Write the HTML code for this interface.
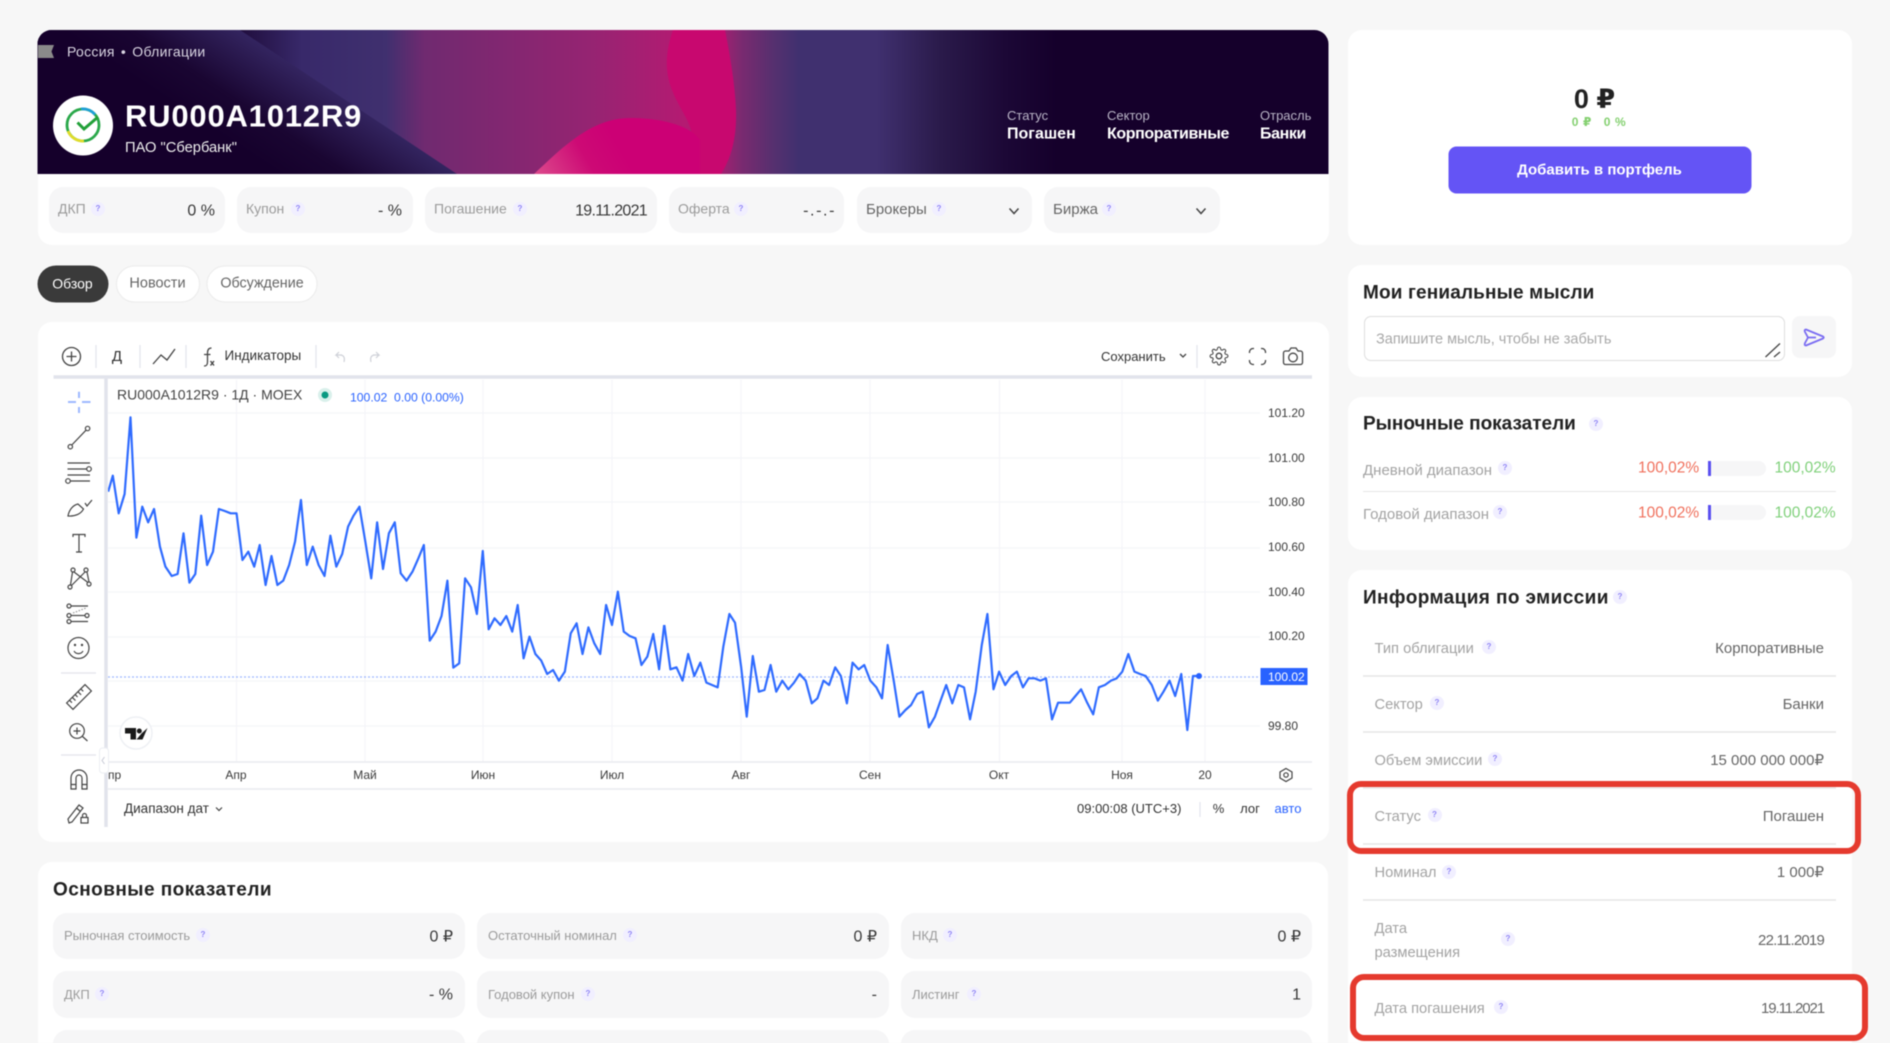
<!DOCTYPE html>
<html lang="ru"><head><meta charset="utf-8"><title>RU000A1012R9</title>
<style>
html,body{margin:0;padding:0;background:#f7f7f7}
#p{position:relative;width:1890px;height:1043px;overflow:hidden;background:#f7f7f7;font-family:"Liberation Sans","DejaVu Sans",sans-serif;color:#333;filter:blur(.45px)}
.c{position:absolute;background:#fff;border-radius:14px}
.b{position:absolute;background:#f6f6f7;border-radius:14px}
.t{position:absolute;white-space:nowrap;transform:translateY(-50%);line-height:1.2}
.r{position:absolute;white-space:nowrap;transform:translateY(-50%);line-height:1.2;text-align:right}
.m{position:absolute;white-space:nowrap;transform:translate(-50%,-50%);line-height:1.2;text-align:center}
.q{position:absolute;width:14px;height:14px;border-radius:50%;background:#f1efff;color:#8f84f5;font-size:8px;font-weight:bold;text-align:center;line-height:14px;transform:translate(-50%,-50%)}
.g{color:#9b9b9b;font-size:14px}
.v{font-size:16px;color:#383838}
.h{font-size:19px;font-weight:bold;color:#222}
.l{font-size:13px;color:#9b9b9b}
.w{font-size:14.7px;color:#a3a3a3}
.x{font-size:15px;color:#666}
.ax{font-size:12px;color:#3a3a3a}
svg{position:absolute;left:0;top:0}
</style></head><body><div id="p">

<div class="c" style="left:37.5px;top:30px;width:1291px;height:215px"></div>
<svg width="1890" height="180" viewBox="0 0 1890 180">
<defs>
<linearGradient id="bg" x1="0" x2="1" y1="0" y2="0" gradientUnits="objectBoundingBox">
<stop offset="0" stop-color="#140029"/><stop offset=".145" stop-color="#1a0632"/><stop offset=".205" stop-color="#38296a"/><stop offset=".27" stop-color="#40306f"/><stop offset=".3" stop-color="#702a70"/><stop offset=".43" stop-color="#962472"/><stop offset=".5" stop-color="#b41b72"/><stop offset=".525" stop-color="#b01c72"/><stop offset=".545" stop-color="#7a2a70"/><stop offset=".57" stop-color="#56306f"/><stop offset=".59" stop-color="#40306f"/><stop offset=".65" stop-color="#40306f"/><stop offset=".7" stop-color="#2a1a4a"/><stop offset=".75" stop-color="#1c0836"/><stop offset=".79" stop-color="#15002b"/><stop offset="1" stop-color="#15002b"/>
</linearGradient>
<linearGradient id="dk" gradientUnits="userSpaceOnUse" x1="323" y1="205" x2="378" y2="122">
<stop offset="0" stop-color="#15002b"/><stop offset=".4" stop-color="#1a0632"/><stop offset="1" stop-color="#33245f"/>
</linearGradient>
<linearGradient id="bl2" gradientUnits="userSpaceOnUse" x1="535" y1="174" x2="610" y2="130">
<stop offset="0" stop-color="#dc4a8c"/><stop offset=".6" stop-color="#cd0a75"/><stop offset="1" stop-color="#cc0075"/>
</linearGradient>
<clipPath id="bc"><path d="M51.5 30H1314.5a14 14 0 0 1 14 14V174H37.5V44a14 14 0 0 1 14-14z"/></clipPath>
</defs>
<g clip-path="url(#bc)">
<rect x="37.5" y="30" width="1291" height="144" fill="url(#bg)"/>
<path d="M37.5 30H240L457 174H37.5Z" fill="url(#dk)"/>
<path d="M673 30C666 50 664 70 672 90C680 110 690 120 692 135V174H721C730 160 737 140 736 110C735 85 730 55 725 30Z" fill="#c8086f"/>
<path d="M534 174C560 150 590 118 630 118C660 118 690 125 700 140V174Z" fill="url(#bl2)"/>
<path d="M38 45H54L51.5 51.5L54 58H38Z" fill="#8a8a8a"/>
</g>
<circle cx="83" cy="125.500" r="30" fill="#fff"/>
<circle cx="83" cy="125" r="16" fill="none" stroke="#2aa84a" stroke-width="2.800"/>
<path d="M81 109A16 16 0 0 1 95 114.500" fill="none" stroke="#1e9fd6" stroke-width="2.800"/>
<path d="M68 131A16 16 0 0 0 84 141" fill="none" stroke="#e0dc2a" stroke-width="2.800"/>
<path d="M77.500 122.500L84 129L98 117" fill="none" stroke="#21a038" stroke-width="3"/>
</svg>
<div class="t" style="left:67px;top:51.500px;font-size:14px;color:#d9d5e2;letter-spacing:.3px;word-spacing:2px">Россия • Облигации</div>
<div class="t" style="left:125px;top:115.500px;font-size:31px;font-weight:bold;color:#fff;letter-spacing:.8px">RU000A1012R9</div>
<div class="t" style="left:125px;top:148.500px;font-size:14.700px;color:#eee">ПАО "Сбербанк"</div>
<div class="t" style="left:1007px;top:116px;font-size:13px;color:#b9b4c6">Статус</div>
<div class="t" style="left:1007px;top:134px;font-size:16px;font-weight:bold;color:#fff">Погашен</div>
<div class="t" style="left:1107px;top:116px;font-size:13px;color:#b9b4c6">Сектор</div>
<div class="t" style="left:1107px;top:134px;font-size:16px;font-weight:bold;color:#fff;letter-spacing:-.4px">Корпоративные</div>
<div class="t" style="left:1260px;top:116px;font-size:13px;color:#b9b4c6">Отрасль</div>
<div class="t" style="left:1260px;top:134px;font-size:16px;font-weight:bold;color:#fff;letter-spacing:-.4px">Банки</div>

<div class="b" style="left:49px;top:187px;width:176px;height:46px"></div>
<div class="b" style="left:237px;top:187px;width:176px;height:46px"></div>
<div class="b" style="left:425px;top:187px;width:232px;height:46px"></div>
<div class="b" style="left:669px;top:187px;width:175px;height:46px"></div>
<div class="b" style="left:857px;top:187px;width:175px;height:46px"></div>
<div class="b" style="left:1044px;top:187px;width:176px;height:46px"></div>
<div class="t g" style="left:58px;top:209px">ДКП</div><div class="q" style="left:98px;top:209px">?</div>
<div class="r v" style="right:1675px;top:211px">0 %</div>
<div class="t g" style="left:246px;top:209px">Купон</div><div class="q" style="left:298px;top:209px">?</div>
<div class="r v" style="right:1488px;top:211px">- %</div>
<div class="t g" style="left:434px;top:209px">Погашение</div><div class="q" style="left:520px;top:209px">?</div>
<div class="r v" style="right:1243px;top:211px;letter-spacing:-.7px">19.11.2021</div>
<div class="t g" style="left:678px;top:209px">Оферта</div><div class="q" style="left:741px;top:209px">?</div>
<div class="r v" style="right:1054px;top:211px;letter-spacing:1.6px">-.-.-</div>
<div class="t" style="left:866px;top:210px;font-size:15px;color:#666">Брокеры</div><div class="q" style="left:939px;top:209px">?</div>
<div class="t" style="left:1053px;top:210px;font-size:15px;color:#666">Биржа</div><div class="q" style="left:1109px;top:209px">?</div>

<div class="m" style="left:72.500px;top:283.500px;width:71px;height:37px;line-height:37px;background:#3a3a3a;border-radius:19px;color:#fff;font-size:14px">Обзор</div>
<div class="m" style="left:157.500px;top:283.500px;width:82px;height:35px;line-height:35px;background:#fff;border:1px solid #ebebeb;border-radius:19px;color:#666;font-size:14.500px">Новости</div>
<div class="m" style="left:262px;top:283.500px;width:109px;height:35px;line-height:35px;background:#fff;border:1px solid #ebebeb;border-radius:19px;color:#666;font-size:14.300px">Обсуждение</div>

<div class="c" style="left:37.500px;top:322px;width:1291px;height:520px"></div>
<div class="c" style="left:37.500px;top:862px;width:1290px;height:200px"></div>

<svg width="1890" height="1043" viewBox="0 0 1890 1043" fill="none">
<defs><clipPath id="ch"><rect x="108" y="380" width="1152" height="382"/></clipPath></defs>
<g stroke="#f4f5f8" stroke-width="1.200">
<path d="M108 413H1260M108 458H1260M108 502H1260M108 548H1260M108 592H1260M108 637H1260M108 681H1260M108 726H1260"/>
<path d="M236.500 380V762M365 380V762M483 380V762M612 380V762M741 380V762M870 380V762M999.500 380V762M1122 380V762M1205 380V762"/>
</g>
<path d="M53.500 377H1312" stroke="#e2e4ec" stroke-width="3.500"/>
<path d="M106 377V827" stroke="#e2e4ec" stroke-width="3.500"/>
<path d="M108 762H1312M108 789H1312" stroke="#e9eaef" stroke-width="1.500"/>
<path d="M108 677H1260" stroke="#2962ff" stroke-opacity=".45" stroke-width="1.200" stroke-dasharray="2 2"/>
<g clip-path="url(#ch)" stroke="#2f6bff" stroke-width="2.200" stroke-linejoin="round">
<polyline vector-effect="non-scaling-stroke" transform="translate(40 370) scale(.42088 .33333)" points="162,365 173,317 187,430 201,372 215,142 229,503 243,410 257,457 271,417 285,530 298,590 313,618 327,612 341,490 355,638 369,612 383,437 397,585 411,545 425,417 439,423 453,430 467,430 481,570 495,545 509,590 522,525 536,645 550,558 564,645 578,632 592,585 606,515 620,390 634,585 648,530 662,585 676,618 690,497 704,590 718,552 732,470 745,437 759,410 773,515 787,625 801,457 815,597 829,490 843,457 857,610 871,632 885,605 899,565 912,525 926,812 940,785 954,738 968,632 982,893 996,880 1010,625 1024,652 1038,732 1052,543 1066,778 1080,745 1094,765 1108,738 1122,785 1135,705 1149,865 1163,800 1177,852 1191,872 1205,912 1219,900 1233,932 1247,905 1261,790 1275,760 1289,852 1303,772 1317,820 1331,852 1345,705 1359,765 1373,665 1387,785 1401,798 1415,805 1429,885 1443,860 1457,792 1471,898 1483,765"/>
<polyline vector-effect="non-scaling-stroke" transform="translate(660 370) scale(.43365 .33333)" points="10,765 24,898 38,892 52,932 65,852 79,918 93,878 107,938 120,945 133,952 146,830 160,732 173,758 187,890 200,1040 214,858 228,965 241,960 255,885 268,965 282,932 296,958 309,938 322,912 336,932 350,1000 363,985 377,932 390,945 404,892 417,918 431,1000 444,878 458,898 471,885 485,932 499,952 512,985 525,825 539,932 552,1040 566,1020 579,1005 593,972 606,965 620,1072 634,1040 647,992 660,945 674,1000 688,945 701,952 715,1048 728,965 742,825 755,732 769,958 782,905 796,945 810,918 823,905 837,952 850,925 864,925 877,932 890,925 904,1048 918,998 931,998 945,998 958,978 971,958 985,998 999,1033 1012,952 1026,945 1040,932 1053,925 1066,905 1080,852 1094,905 1107,912 1120,918 1134,945 1148,992 1161,965 1175,932 1188,978 1202,912 1216,1080 1229,918 1243,918"/>
</g>
<circle cx="1199" cy="676" r="3" fill="#2962ff"/>
<rect x="1260.500" y="668" width="47" height="17" fill="#2962ff"/>
<circle cx="325" cy="395" r="7" fill="#d9f0eb"/><circle cx="325" cy="395" r="3.500" fill="#089981"/>
<g stroke="#e2e4ec" stroke-width="1.200"><path d="M96 345V368M140 345V368M186 345V368M316 345V368M1197 345V368"/></g>
<g stroke="#444" stroke-width="1.300">
<circle cx="71.500" cy="356.500" r="9"/><path d="M71.500 351.500V361.500M66.500 356.500H76.500"/>
<path d="M153 364L161 355L167 360L175 349"/>
<path d="M211.500 348C208.500 348 207.500 350 207.500 353V362C207.500 365 206.500 366 204 366M204 354.500H210.500"/>
<path d="M210.500 361L214 365.500M214 361L210.500 365.500" stroke-width="1.400"/>
<path d="M1180 354L1183 357L1186 354"/>
<path transform="translate(1209.300 346.300) scale(.81)" d="M19.400 15a1.650 1.650 0 0 0 .33 1.820l.06.06a2 2 0 0 1 0 2.830 2 2 0 0 1-2.830 0l-.06-.06a1.650 1.650 0 0 0-1.820-.33 1.650 1.650 0 0 0-1 1.510V21a2 2 0 0 1-2 2 2 2 0 0 1-2-2v-.09A1.650 1.650 0 0 0 9 19.400a1.650 1.650 0 0 0-1.820.33l-.06.06a2 2 0 0 1-2.830 0 2 2 0 0 1 0-2.830l.06-.06a1.650 1.650 0 0 0 .33-1.820 1.650 1.650 0 0 0-1.510-1H3a2 2 0 0 1-2-2 2 2 0 0 1 2-2h.09A1.650 1.650 0 0 0 4.600 9a1.650 1.650 0 0 0-.33-1.820l-.06-.06a2 2 0 0 1 0-2.830 2 2 0 0 1 2.830 0l.06.06a1.650 1.650 0 0 0 1.820.33H9a1.650 1.650 0 0 0 1-1.510V3a2 2 0 0 1 2-2 2 2 0 0 1 2 2v.09a1.650 1.650 0 0 0 1 1.510 1.650 1.650 0 0 0 1.820-.33l.06-.06a2 2 0 0 1 2.830 0 2 2 0 0 1 0 2.830l-.06.06a1.650 1.650 0 0 0-.33 1.820V9a1.650 1.650 0 0 0 1.510 1H21a2 2 0 0 1 2 2 2 2 0 0 1-2 2h-.09a1.650 1.650 0 0 0-1.510 1z"/>
<circle cx="1219" cy="356" r="2.800"/>
<path d="M1249.500 353V352a3.500 3.500 0 0 1 3.500-3.500H1254M1261 348.500h1a3.500 3.500 0 0 1 3.500 3.500V353M1265.500 360V361a3.500 3.500 0 0 1-3.500 3.500H1261M1254 364.500h-1a3.500 3.500 0 0 1-3.500-3.500V360"/>
<path d="M1285.500 351H1289L1291 348H1296L1298 351H1300.500A2 2 0 0 1 1302.500 353V362.500A2 2 0 0 1 1300.500 364.500H1285.500A2 2 0 0 1 1283.500 362.500V353A2 2 0 0 1 1285.500 351Z"/>
<circle cx="1293" cy="357.500" r="4.300"/>
</g>
<g stroke="#cfd1d8" stroke-width="1.200"><path d="M342 355H336L339 352M336 355L339 358M336 355H340C344 355 345 358 344 362"/><path d="M373 355H379L376 352M379 355L376 358M379 355H375C371 355 370 358 371 362"/></g>
<g stroke="#9db8ff" stroke-width="2"><path d="M79 391.700V398M79 407V413M68 402H76M82 402H90.500"/></g>
<g stroke="#444" stroke-width="1.200">
<circle cx="70.300" cy="446.700" r="2.200"/><circle cx="87.600" cy="428.500" r="2.200"/><path d="M71.800 445L86 430.200"/>
<path d="M67.500 463H90M67.500 469H86.500M67.500 475H90M70.500 481H90"/><circle cx="89" cy="469" r="2.300"/><circle cx="68" cy="481" r="2.300"/>
<path d="M68 516C69 510 73 505 78 504L83.500 509C81 514 75 516.500 68 516Z"/><path d="M85 503L87 506L92 500"/>
<path d="M73 537V534.500H85V537M79 534.500V552M76 552H82"/>
<circle cx="73" cy="570" r="2"/><circle cx="86" cy="570" r="2"/><circle cx="70" cy="587" r="2"/><circle cx="89" cy="584" r="2"/>
<path d="M72.500 572L70.500 585M74 572L88 582.500M85 572L71.500 585.500M87 572L89 582"/>
<circle cx="69" cy="606" r="2"/><path d="M71 606H88"/><circle cx="69" cy="615.500" r="2"/><circle cx="87" cy="615.500" r="2"/><path d="M71 615.500H85"/><circle cx="69" cy="621.500" r="2"/><path d="M71 621.500H88"/><path d="M73 613L86 608" stroke-dasharray="1.500 1.500" stroke="#999"/>
<circle cx="78.500" cy="648" r="10.500"/><path d="M74 651C76 654.500 81 654.500 83 651"/><circle cx="75" cy="645" r=".6" fill="#444"/><circle cx="82" cy="645" r=".6" fill="#444"/>
<g transform="rotate(-45 79 697)"><rect x="66" y="692.500" width="26" height="9"/><path d="M70 692.500V696M74 692.500V697M78 692.500V696M82 692.500V697M86 692.500V696"/></g>
<circle cx="77" cy="731" r="7.300"/><path d="M82.500 736.500L87.500 741M77 727.500V734.500M73.500 731H80.500"/>
<path d="M71 789V778a8 8 0 0 1 16 0V789H82V778a3 3 0 0 0-6 0V789ZM71 784.500H76M82 784.500H87"/>
<path d="M69 823L68 819L79 805L83 808L72 822Z M76.500 808L80.500 811.500"/>
<rect x="81" y="817.500" width="7" height="5.500"/><path d="M82.500 817.500V815.500a2 2 0 0 1 4 0V817.500"/>
</g>
<path d="M61 673H96M61 755H96" stroke="#e2e4ec" stroke-width="1.200"/>
<rect x="99.500" y="748" width="9" height="25" rx="3" fill="#fff" stroke="#eceef3"/>
<path d="M104.500 757L102 760.500L104.500 764" stroke="#c8cbd6" stroke-width="1"/>
<circle cx="136" cy="733" r="16" fill="#fff" stroke="#eef0f4" stroke-width="1.500"/>
<path d="M125 728H136V739.500H130.500V733.500H125Z" fill="#1a1a1a"/><circle cx="139.300" cy="731" r="2.500" fill="#1a1a1a"/><path d="M147.500 728L142.500 739.500H136.500L141.500 733.500Z" fill="#1a1a1a"/>
<path d="M1286 768.500L1292 772V778L1286 781.500L1280 778V772Z" stroke="#444" stroke-width="1.200"/><circle cx="1286" cy="775" r="2.200" stroke="#444" stroke-width="1.200"/>
<path d="M1200 802V817" stroke="#e2e4ec" stroke-width="1.200"/>
<path d="M216 807.500L219 810.500L222 807.500" stroke="#444" stroke-width="1.200"/>
<path d="M1009.500 208.500L1014 213.500L1018.500 208.500M1196.500 208.500L1201 213.500L1205.500 208.500" stroke="#444" stroke-width="1.500"/>
</svg>

<div class="t" style="left:117px;top:356.500px;transform:translate(-50%,-50%);font-size:15px;color:#333">Д</div>
<div class="t" style="left:224.500px;top:356px;font-size:13.500px;color:#333">Индикаторы</div>
<div class="t" style="left:1101px;top:356.500px;font-size:13px;color:#333">Сохранить</div>
<div class="t" style="left:117px;top:395px;font-size:14px;color:#444">RU000A1012R9 · 1Д · MOEX</div>
<div class="t" style="left:350px;top:398px;font-size:12.200px;color:#2962ff">100.02&nbsp; 0.00 (0.00%)</div>
<div class="t ax" style="left:1268px;top:413px">101.20</div>
<div class="t ax" style="left:1268px;top:458px">101.00</div>
<div class="t ax" style="left:1268px;top:502px">100.80</div>
<div class="t ax" style="left:1268px;top:547px">100.60</div>
<div class="t ax" style="left:1268px;top:592px">100.40</div>
<div class="t ax" style="left:1268px;top:636px">100.20</div>
<div class="t ax" style="left:1268px;top:677px;color:#fff">100.02</div>
<div class="t ax" style="left:1268px;top:726px">99.80</div>
<div class="t ax" style="left:108px;top:775px">пр</div>
<div class="m ax" style="left:236px;top:775px">Апр</div>
<div class="m ax" style="left:365px;top:775px">Май</div>
<div class="m ax" style="left:483px;top:775px">Июн</div>
<div class="m ax" style="left:612px;top:775px">Июл</div>
<div class="m ax" style="left:741px;top:775px">Авг</div>
<div class="m ax" style="left:870px;top:775px">Сен</div>
<div class="m ax" style="left:999px;top:775px">Окт</div>
<div class="m ax" style="left:1122px;top:775px">Ноя</div>
<div class="m ax" style="left:1205px;top:775px">20</div>
<div class="t" style="left:124px;top:809px;font-size:13.500px;color:#333">Диапазон дат</div>
<div class="t" style="left:1077px;top:809px;font-size:13px;color:#333">09:00:08 (UTC+3)</div>
<div class="m" style="left:1218.500px;top:809px;font-size:13px;color:#333">%</div>
<div class="m" style="left:1250px;top:809px;font-size:13px;color:#333">лог</div>
<div class="m" style="left:1288px;top:809px;font-size:13px;color:#2962ff">авто</div>

<div class="t h" style="left:53px;top:891px;letter-spacing:.45px">Основные показатели</div>
<div class="b" style="left:53px;top:913px;width:412px;height:46px"></div>
<div class="b" style="left:477px;top:913px;width:412px;height:46px"></div>
<div class="b" style="left:901px;top:913px;width:411px;height:46px"></div>
<div class="b" style="left:53px;top:971px;width:412px;height:47px"></div>
<div class="b" style="left:477px;top:971px;width:412px;height:47px"></div>
<div class="b" style="left:901px;top:971px;width:411px;height:47px"></div>
<div class="b" style="left:53px;top:1030px;width:412px;height:47px"></div>
<div class="b" style="left:477px;top:1030px;width:412px;height:47px"></div>
<div class="b" style="left:901px;top:1030px;width:411px;height:47px"></div>
<div class="t l" style="left:64px;top:936px">Рыночная стоимость</div><div class="q" style="left:203px;top:935px">?</div><div class="r v" style="right:1437px;top:937px">0 ₽</div>
<div class="t l" style="left:488px;top:936px">Остаточный номинал</div><div class="q" style="left:630px;top:935px">?</div><div class="r v" style="right:1013px;top:937px">0 ₽</div>
<div class="t l" style="left:912px;top:936px">НКД</div><div class="q" style="left:950px;top:935px">?</div><div class="r v" style="right:589px;top:937px">0 ₽</div>
<div class="t l" style="left:64px;top:995px">ДКП</div><div class="q" style="left:102px;top:994px">?</div><div class="r v" style="right:1437px;top:995px">- %</div>
<div class="t l" style="left:488px;top:995px">Годовой купон</div><div class="q" style="left:588px;top:994px">?</div><div class="r v" style="right:1013px;top:995px">-</div>
<div class="t l" style="left:912px;top:995px">Листинг</div><div class="q" style="left:974px;top:994px">?</div><div class="r v" style="right:589px;top:995px">1</div>

<div class="c" style="left:1348px;top:30px;width:504px;height:215px"></div>
<div class="c" style="left:1348px;top:265px;width:504px;height:112px"></div>
<div class="c" style="left:1348px;top:397px;width:504px;height:153px"></div>
<div class="c" style="left:1348px;top:570px;width:504px;height:500px"></div>
<div class="m" style="left:1594.500px;top:99px;font-size:27px;font-weight:bold;color:#222">0 ₽</div>
<div class="m" style="left:1599px;top:122px;font-size:12px;font-weight:bold;color:#84d070;letter-spacing:.6px">0 ₽ &nbsp; 0 %</div>
<div class="m" style="left:1599.500px;top:169.500px;width:303px;height:47px;line-height:47px;background:#6454f5;border-radius:8px;color:#fff;font-size:15px;font-weight:bold">Добавить в портфель</div>

<div class="t h" style="left:1363px;top:294px;letter-spacing:.15px">Мои гениальные мысли</div>
<div style="position:absolute;left:1363.500px;top:316px;width:419px;height:43px;border:1.500px solid #dedede;border-radius:7px;background:#fff"></div>
<div class="t" style="left:1376px;top:340px;font-size:14.500px;color:#a8a8a8">Запишите мысль, чтобы не забыть</div>
<div class="b" style="left:1792px;top:316px;width:44px;height:42px;border-radius:8px"></div>

<div class="t h" style="left:1363px;top:425px">Рыночные показатели</div><div class="q" style="left:1596px;top:424px">?</div>
<div class="t" style="left:1363px;top:471px;font-size:15px;color:#a3a3a3">Дневной диапазон</div><div class="q" style="left:1505px;top:468px">?</div>
<div class="t" style="left:1638px;top:469px;font-size:15.500px;color:#f0705c">100,02%</div>
<div class="b" style="left:1707.500px;top:461px;width:58.500px;height:15px;border-radius:8px 8px 8px 8px"></div>
<div style="position:absolute;left:1707.500px;top:461px;width:3px;height:15px;background:#5a4ff0"></div>
<div class="t" style="left:1774.500px;top:469px;font-size:15.500px;color:#7fd07a">100,02%</div>
<div style="position:absolute;left:1363px;top:490.500px;width:473px;height:1.500px;background:#e6e6e6"></div>
<div class="t" style="left:1363px;top:515px;font-size:15px;color:#a3a3a3">Годовой диапазон</div><div class="q" style="left:1500px;top:512px">?</div>
<div class="t" style="left:1638px;top:513.500px;font-size:15.500px;color:#f0705c">100,02%</div>
<div class="b" style="left:1707.500px;top:505px;width:58.500px;height:15px;border-radius:8px"></div>
<div style="position:absolute;left:1707.500px;top:505px;width:3px;height:15px;background:#5a4ff0"></div>
<div class="t" style="left:1774.500px;top:513.500px;font-size:15.500px;color:#7fd07a">100,02%</div>

<div class="t h" style="left:1363px;top:599px;letter-spacing:.4px">Информация по эмиссии</div><div class="q" style="left:1620px;top:597px">?</div>
<div class="t w" style="left:1374.500px;top:650px">Тип облигации</div><div class="q" style="left:1489px;top:647px">?</div><div class="r x" style="right:66px;top:649px">Корпоративные</div>
<div class="t w" style="left:1374.500px;top:706px">Сектор</div><div class="q" style="left:1437px;top:703px">?</div><div class="r x" style="right:66px;top:705px">Банки</div>
<div class="t w" style="left:1374.500px;top:762px">Объем эмиссии</div><div class="q" style="left:1495px;top:759px">?</div><div class="r x" style="right:66px;top:761px">15 000 000 000₽</div>
<div class="t w" style="left:1374.500px;top:818px">Статус</div><div class="q" style="left:1434.500px;top:815px">?</div><div class="r x" style="right:66px;top:817px">Погашен</div>
<div class="t w" style="left:1374.500px;top:874px">Номинал</div><div class="q" style="left:1449px;top:872px">?</div><div class="r x" style="right:66px;top:873px">1 000₽</div>
<div class="t w" style="left:1374.500px;top:930px">Дата</div><div class="t w" style="left:1374.500px;top:954px">размещения</div><div class="q" style="left:1508px;top:939px">?</div><div class="r x" style="right:66px;top:941px;letter-spacing:-.8px">22.11.2019</div>
<div class="t w" style="left:1374.500px;top:1010px">Дата погашения</div><div class="q" style="left:1501px;top:1007px">?</div><div class="r x" style="right:66px;top:1009px;letter-spacing:-1.100px">19.11.2021</div>
<svg width="1890" height="1043" viewBox="0 0 1890 1043" fill="none">
<path d="M1363 676H1836M1363 732H1836M1363 788H1836M1363 844H1836M1363 900H1836" stroke="#e6e6e6" stroke-width="1.500"/>
<rect x="1852" y="977" width="15" height="62" fill="#fff"/>
<path d="M1806 329.500L1823 336.500Q1824.500 337.500 1823 338.500L1806 345.500Q1804 345.500 1805 343L1808 337.500L1805 332Q1804 329.500 1806 329.500ZM1808 337.500H1816" stroke="#7a6cf2" stroke-width="1.800" stroke-linejoin="round"/>
<path d="M1765.500 357L1780 343.500M1774 357L1780 352" stroke="#444" stroke-width="1.300"/>
<rect x="1350" y="784" width="508" height="67" rx="11" stroke="#e53a2e" stroke-width="6"/>
<rect x="1353" y="977" width="512" height="61" rx="11" stroke="#e53a2e" stroke-width="6"/>
</svg>
</div></body></html>
